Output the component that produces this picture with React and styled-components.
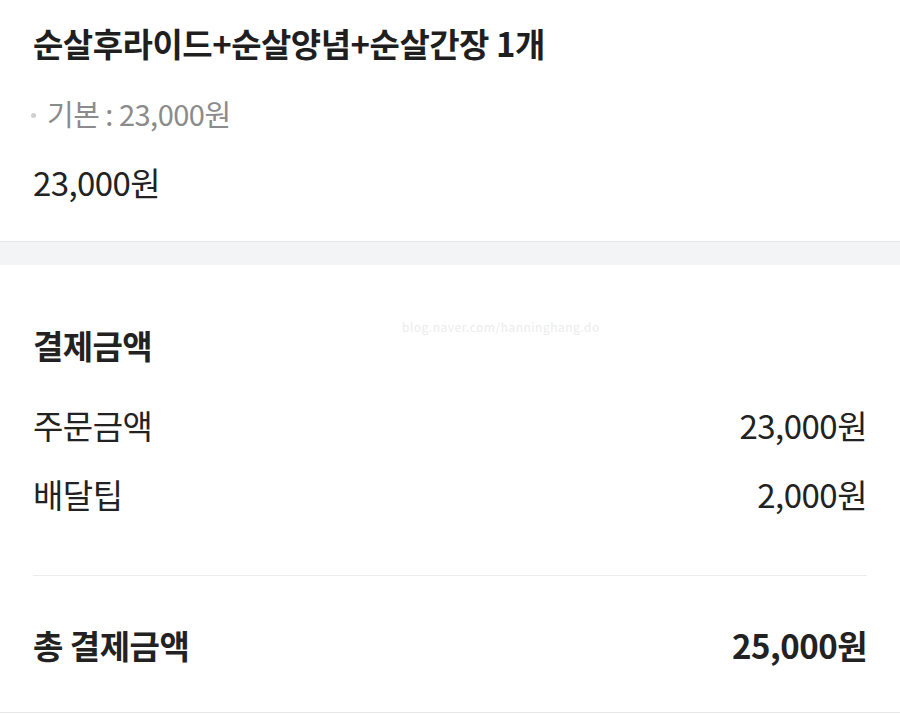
import styled, { createGlobalStyle } from 'styled-components';

const GlobalStyle = createGlobalStyle`
    body {
        margin: 0;
        background: #fff;
        font-family: 'Noto Sans CJK KR', 'Noto Sans', sans-serif;
        color: #222;
    }
`;

const Page = styled.div`
    position: relative;
    width: 900px;
`;

const MenuSection = styled.section`
    padding: 21px 33px 39px;
    border-bottom: 1px solid #e6e7e9;
`;

const MenuTitle = styled.h1`
    margin: 0;
    font-size: 33px;
    line-height: 44px;
    font-weight: 700;
    letter-spacing: -0.5px;
    color: #1f1f1f;
`;

const OptionLine = styled.div`
    position: relative;
    margin-top: 28px;
    padding-left: 14px;
    font-size: 29px;
    line-height: 40px;
    color: #8b8b8b;
    letter-spacing: -0.5px;

    &::before {
        content: '';
        position: absolute;
        left: -2px;
        top: 20px;
        width: 5px;
        height: 5px;
        border-radius: 50%;
        background: #cfcfcf;
    }
`;

const MenuPrice = styled.div`
    margin-top: 29px;
    font-size: 33px;
    line-height: 40px;
    letter-spacing: -0.6px;
    color: #222;
`;

const Gap = styled.div`
    height: 23px;
    background: #f3f4f6;
`;

const PaySection = styled.section`
    padding: 60px 33px 47px;
    border-bottom: 1px solid #e6e6e6;
`;

const PayTitle = styled.h2`
    margin: 0 0 40px;
    font-size: 33px;
    line-height: 40px;
    font-weight: 700;
    letter-spacing: -0.6px;
`;

const Row = styled.div`
    display: flex;
    justify-content: space-between;
    align-items: center;
    font-size: 33px;
    line-height: 40px;
    letter-spacing: -0.5px;
    font-weight: ${p => (p.$bold ? 700 : 400)};
    margin-top: ${p => p.$top || 0}px;
`;

const Divider = styled.hr`
    margin: 61px 0 49px;
    border: 0;
    border-top: 1px solid #ececec;
`;

const Watermark = styled.span`
    position: absolute;
    left: 402px;
    top: 318px;
    font-size: 12px;
    color: #ececec;
    letter-spacing: 0.5px;
`;

const App = () => (
    <Page>
        <GlobalStyle />
        <MenuSection>
            <MenuTitle>순살후라이드+순살양념+순살간장 1개</MenuTitle>
            <OptionLine>기본 : 23,000원</OptionLine>
            <MenuPrice>23,000원</MenuPrice>
        </MenuSection>
        <Gap />
        <PaySection>
            <PayTitle>결제금액</PayTitle>
            <Row>
                <span>주문금액</span>
                <span>23,000원</span>
            </Row>
            <Row $top={29}>
                <span>배달팁</span>
                <span>2,000원</span>
            </Row>
            <Divider />
            <Row $bold>
                <span>총 결제금액</span>
                <span>25,000원</span>
            </Row>
        </PaySection>
        <Watermark>blog.naver.com/hanninghang.do</Watermark>
    </Page>
);

export default App;
